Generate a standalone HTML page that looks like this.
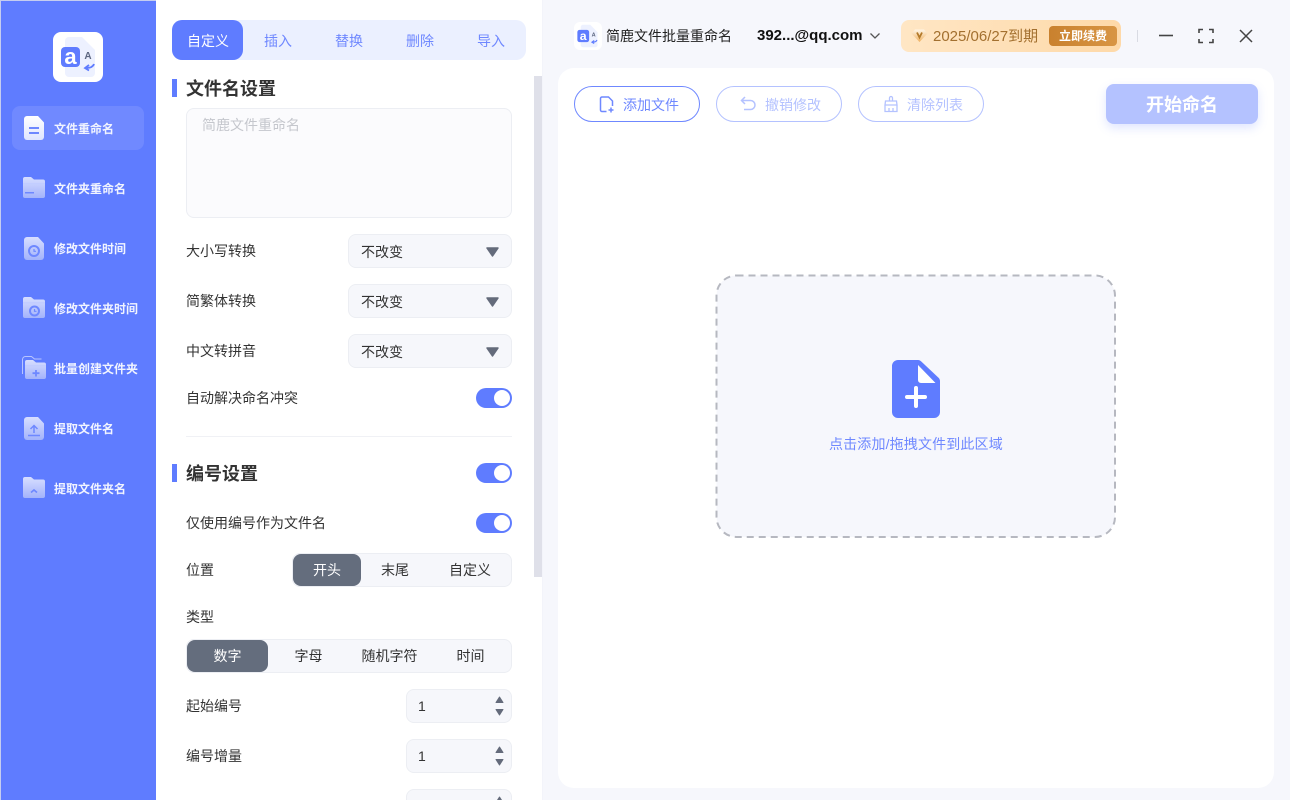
<!DOCTYPE html>
<html lang="zh-CN"><head><meta charset="utf-8"><title>简鹿文件批量重命名</title>
<style>
*{box-sizing:border-box;margin:0;padding:0}
html,body{width:1290px;height:800px;overflow:hidden;background:#f6f7fc}
body{position:relative;font-family:"Liberation Sans","Noto Sans CJK SC",sans-serif;font-size:14px;color:#333}
.a{position:absolute}
.t{position:absolute;white-space:nowrap;line-height:20px}
.side{left:1px;top:1px;width:155px;height:799px;background:#5f7cff}
.nav{position:absolute;left:54px;font-size:12px;font-weight:bold;color:#f1f4ff;line-height:18px;white-space:nowrap}
.ic{position:absolute;left:20px;width:28px;height:28px}
.sel{position:absolute;left:348px;width:164px;height:34px;background:#f6f7fb;border:1px solid #eceef3;border-radius:8px}
.sel span{position:absolute;left:12px;top:7px;line-height:20px;color:#333}
.sel svg{position:absolute;left:136px;top:11px}
.sw{position:absolute;left:476px;width:36px;height:20px;border-radius:10px;background:#5f7cff}
.sw i{position:absolute;right:2px;top:2px;width:16px;height:16px;border-radius:50%;background:#fff}
.seg{position:absolute;height:34px;background:#f6f7fb;border:1px solid #eceef3;border-radius:8px}
.seg b{position:absolute;top:0;height:32px;background:#646d7d;border-radius:8px}
.seg span{position:absolute;top:6px;line-height:20px;text-align:center;color:#333;white-space:nowrap}
.num{position:absolute;left:406px;width:106px;height:34px;background:#f6f7fb;border:1px solid #eceef3;border-radius:8px}
.num span{position:absolute;left:11px;top:6px;line-height:20px;color:#333}
.num svg{position:absolute;left:87px;top:5px}
.btn{position:absolute;top:86px;height:36px;border-radius:18px;background:#fff;border:1px solid #b4c2ff;font-size:14px;color:#b4c2ff;line-height:34px;white-space:nowrap}
.btn span{position:absolute;top:0;line-height:36px}
.bar{position:absolute;left:172px;width:5px;height:18px;background:#5f7cff}
.h{position:absolute;left:186px;font-size:18px;font-weight:bold;color:#333;line-height:24px;white-space:nowrap}
</style></head><body>

<div class="a" style="left:0;top:0;width:156px;height:1px;background:#c5cdf0"></div>
<div class="a" style="left:0;top:0;width:1px;height:800px;background:#c5cdf0"></div>
<div class="a side"></div>
<div class="a" style="left:156px;top:0;width:386px;height:800px;background:#fff"></div>

<!-- logo -->
<div class="a" style="left:53px;top:32px;width:50px;height:50px;background:#fff;border-radius:8px"></div>
<svg class="a" style="left:53px;top:32px" width="50" height="50" viewBox="0 0 50 50">
<path d="M12 9a4 4 0 0 1 4-4h13l13 13v23a4 4 0 0 1-4 4H16a4 4 0 0 1-4-4z" fill="#edf1ff"/>
<rect x="8" y="15" width="19" height="20" rx="4" fill="#5f7cff"/>
<text x="17.500" y="32" font-size="22" font-weight="bold" text-anchor="middle" fill="#fff" font-family="Liberation Sans">a</text>
<text x="35" y="27" font-size="10" font-weight="bold" text-anchor="middle" fill="#5c6680" font-family="Liberation Sans">A</text>
<path d="M41 32c-1 3-4 4-8 4M36 33l-4 3 4 2.500" fill="none" stroke="#5f7cff" stroke-width="1.800"/>
</svg>

<div class="a" style="left:12px;top:106px;width:132px;height:44px;background:#7089ff;border-radius:8px"></div>

<svg class="ic" style="top:114px" viewBox="0 0 28 28"><defs><linearGradient id="g1" x1="0" y1="0" x2="0" y2="1"><stop offset="0" stop-color="#fff"/><stop offset="1" stop-color="#dfe5ff"/></linearGradient><linearGradient id="g2" x1="0" y1="0" x2="0" y2="1"><stop offset="0" stop-color="#d7deff"/><stop offset="1" stop-color="#a3b3fb"/></linearGradient></defs>
<path d="M4 5a3 3 0 0 1 3-3h11l6 6.500V23a3 3 0 0 1-3 3H7a3 3 0 0 1-3-3z" fill="url(#g1)"/><rect x="9" y="13" width="10" height="2" fill="#6e88ff"/><rect x="9" y="18" width="10" height="2" fill="#6e88ff"/></svg>
<div class="nav" style="top:120px">文件重命名</div>

<svg class="ic" style="top:174px" viewBox="0 0 28 28"><path d="M3 5a2 2 0 0 1 2-2h6l3 2.500h9a2 2 0 0 1 2 2V22a2 2 0 0 1-2 2H5a2 2 0 0 1-2-2z" fill="url(#g2)"/><rect x="3" y="9" width="22" height="1.500" fill="#c2cdff"/><rect x="5" y="18" width="9" height="1.500" fill="#6e88ff"/></svg>
<div class="nav" style="top:180px">文件夹重命名</div>

<svg class="ic" style="top:234px" viewBox="0 0 28 28"><path d="M4 6a3 3 0 0 1 3-3h11l6 6.500V23a3 3 0 0 1-3 3H7a3 3 0 0 1-3-3z" fill="url(#g2)"/><circle cx="14" cy="17" r="5" fill="none" stroke="#6e88ff" stroke-width="2"/><path d="M14 15v2.300h2" fill="none" stroke="#6e88ff" stroke-width="1.200"/></svg>
<div class="nav" style="top:240px">修改文件时间</div>

<svg class="ic" style="top:294px" viewBox="0 0 28 28"><path d="M3 5a2 2 0 0 1 2-2h6l3 2.500h9a2 2 0 0 1 2 2V22a2 2 0 0 1-2 2H5a2 2 0 0 1-2-2z" fill="url(#g2)"/><rect x="3" y="8" width="22" height="1.500" fill="#c2cdff"/><circle cx="14.500" cy="17" r="4.500" fill="none" stroke="#6e88ff" stroke-width="2"/><path d="M14.500 15v2.300h2" fill="none" stroke="#6e88ff" stroke-width="1.200"/></svg>
<div class="nav" style="top:300px">修改文件夹时间</div>

<svg class="ic" style="top:354px;left:20px;width:30px;height:30px" viewBox="0 0 30 30"><path d="M2.500 20V5.500a3 3 0 0 1 3-3h6l3 2.500h7" fill="none" stroke="#b8c5ff" stroke-width="1"/><path d="M5 8a2 2 0 0 1 2-2h6l3 2.500h8a2 2 0 0 1 2 2V23a2 2 0 0 1-2 2H7a2 2 0 0 1-2-2z" fill="url(#g2)"/><rect x="5" y="11" width="21" height="1.500" fill="#c2cdff"/><path d="M16 16v6.500M12.500 19.200h7" stroke="#6e88ff" stroke-width="1.800"/></svg>
<div class="nav" style="top:360px">批量创建文件夹</div>

<svg class="ic" style="top:414px" viewBox="0 0 28 28"><path d="M4 6a3 3 0 0 1 3-3h11l6 6.500V23a3 3 0 0 1-3 3H7a3 3 0 0 1-3-3z" fill="url(#g2)"/><path d="M14 19v-7M10.500 15l3.500-3.500 3.500 3.500M8 21.500h12" fill="none" stroke="#6e88ff" stroke-width="1.500"/></svg>
<div class="nav" style="top:420px">提取文件名</div>

<svg class="ic" style="top:474px" viewBox="0 0 28 28"><path d="M3 5a2 2 0 0 1 2-2h6l3 2.500h9a2 2 0 0 1 2 2V22a2 2 0 0 1-2 2H5a2 2 0 0 1-2-2z" fill="url(#g2)"/><path d="M11 18.500l3-2.500 3 2.500" fill="none" stroke="#6e88ff" stroke-width="1.700"/></svg>
<div class="nav" style="top:480px">提取文件夹名</div>

<!-- tabs -->
<div class="a" style="left:172px;top:20px;width:354px;height:40px;background:#ebf0ff;border-radius:10px"></div>
<div class="a" style="left:172px;top:20px;width:71px;height:40px;background:#5f7cff;border-radius:10px"></div>
<div class="t" style="left:187px;top:31px;color:#fff">自定义</div>
<div class="t" style="left:264px;top:31px;color:#6f88ff">插入</div>
<div class="t" style="left:335px;top:31px;color:#6f88ff">替换</div>
<div class="t" style="left:406px;top:31px;color:#6f88ff">删除</div>
<div class="t" style="left:477px;top:31px;color:#6f88ff">导入</div>

<!-- scrollbar -->
<div class="a" style="left:534px;top:76px;width:8px;height:501px;background:#dfe0e9"></div>
<div class="a" style="left:542px;top:0;width:1px;height:800px;background:#f3f4fa"></div>

<!-- file name settings -->
<div class="bar" style="top:79px"></div>
<div class="h" style="top:77px">文件名设置</div>
<div class="a" style="left:186px;top:108px;width:326px;height:110px;background:#fbfbfd;border:1px solid #eceef3;border-radius:8px"></div>
<div class="t" style="left:202px;top:115px;color:#c5c7cd">简鹿文件重命名</div>

<div class="t" style="left:186px;top:241px">大小写转换</div>
<div class="sel" style="top:234px"><span>不改变</span><svg width="16" height="12" viewBox="0 0 16 12"><path d="M2 2h11L7.500 10z" fill="#646b7b" stroke="#646b7b" stroke-width="1.500" stroke-linejoin="round"/></svg></div>
<div class="t" style="left:186px;top:291px">简繁体转换</div>
<div class="sel" style="top:284px"><span>不改变</span><svg width="16" height="12" viewBox="0 0 16 12"><path d="M2 2h11L7.500 10z" fill="#646b7b" stroke="#646b7b" stroke-width="1.500" stroke-linejoin="round"/></svg></div>
<div class="t" style="left:186px;top:341px">中文转拼音</div>
<div class="sel" style="top:334px"><span>不改变</span><svg width="16" height="12" viewBox="0 0 16 12"><path d="M2 2h11L7.500 10z" fill="#646b7b" stroke="#646b7b" stroke-width="1.500" stroke-linejoin="round"/></svg></div>
<div class="t" style="left:186px;top:388px">自动解决命名冲突</div>
<div class="sw" style="top:388px"><i></i></div>
<div class="a" style="left:186px;top:436px;width:326px;height:1px;background:#f0f1f5"></div>

<!-- numbering -->
<div class="bar" style="top:464px"></div>
<div class="h" style="top:462px">编号设置</div>
<div class="sw" style="top:463px"><i></i></div>
<div class="t" style="left:186px;top:513px">仅使用编号作为文件名</div>
<div class="sw" style="top:513px"><i></i></div>

<div class="t" style="left:186px;top:560px">位置</div>
<div class="seg" style="left:292px;top:553px;width:220px"><b style="left:0;width:68px"></b>
<span style="left:0;width:68px;color:#fff">开头</span><span style="left:68px;width:68px">末尾</span><span style="left:136px;width:82px">自定义</span></div>

<div class="t" style="left:186px;top:607px">类型</div>
<div class="seg" style="left:186px;top:639px;width:326px"><b style="left:0;width:81px"></b>
<span style="left:0;width:81px;color:#fff">数字</span><span style="left:81px;width:81px">字母</span><span style="left:162px;width:81px">随机字符</span><span style="left:243px;width:81px">时间</span></div>

<div class="t" style="left:186px;top:696px">起始编号</div>
<div class="num" style="top:689px"><span>1</span><svg width="11" height="22" viewBox="0 0 11 22"><path d="M2 7.500h7L5.500 2zM2 14.500h7L5.500 20z" fill="#646b7b" stroke="#646b7b" stroke-width="1" stroke-linejoin="round"/></svg></div>
<div class="t" style="left:186px;top:746px">编号增量</div>
<div class="num" style="top:739px"><span>1</span><svg width="11" height="22" viewBox="0 0 11 22"><path d="M2 7.500h7L5.500 2zM2 14.500h7L5.500 20z" fill="#646b7b" stroke="#646b7b" stroke-width="1" stroke-linejoin="round"/></svg></div>
<div class="num" style="top:789px"><svg width="11" height="22" viewBox="0 0 11 22"><path d="M2 7.500h7L5.500 2z" fill="#646b7b" stroke="#646b7b" stroke-width="1" stroke-linejoin="round"/></svg></div>

<!-- title bar -->
<div class="a" style="left:574px;top:22px;width:28px;height:28px;background:#fff;border-radius:6px"></div>
<svg class="a" style="left:574px;top:22px" width="28" height="28" viewBox="0 0 50 50">
<path d="M12 9a4 4 0 0 1 4-4h13l13 13v23a4 4 0 0 1-4 4H16a4 4 0 0 1-4-4z" fill="#edf1ff"/>
<rect x="6" y="14" width="21" height="22" rx="4" fill="#5f7cff"/>
<text x="16.500" y="32" font-size="22" font-weight="bold" text-anchor="middle" fill="#fff" font-family="Liberation Sans">a</text>
<text x="35" y="26" font-size="10" font-weight="bold" text-anchor="middle" fill="#5c6680" font-family="Liberation Sans">A</text>
<path d="M41 32c-1 3-4 4-8 4M36 33l-4 3 4 2.500" fill="none" stroke="#5f7cff" stroke-width="2"/>
</svg>
<div class="t" style="left:606px;top:26px;color:#222">简鹿文件批量重命名</div>
<div class="t" style="left:757px;top:26px;color:#111;font-weight:bold;font-size:15px">392...@qq.com</div>
<svg class="a" style="left:868px;top:30px" width="14" height="12" viewBox="0 0 14 12"><path d="M2.500 3.500l4.500 4.500 4.500-4.500" fill="none" stroke="#555" stroke-width="1.300"/></svg>

<div class="a" style="left:901px;top:20px;width:220px;height:32px;border-radius:8px;background:linear-gradient(90deg,#ffe6c4,#fed9a9)"></div>
<svg class="a" style="left:911px;top:27px" width="18" height="18" viewBox="0 0 18 18"><defs><linearGradient id="g3" x1="0" y1="0" x2="0" y2="1"><stop offset="0" stop-color="#fff6e8"/><stop offset="1" stop-color="#f0b160"/></linearGradient></defs><path d="M4 2.500h9l3.500 4-8 8.500-8-8.500z" fill="url(#g3)"/><path d="M6 5.500l2.500 5 2.500-5" fill="none" stroke="#b37a2a" stroke-width="1.800"/></svg>
<div class="t" style="left:933px;top:27px;color:#a3702f;font-size:15px">2025/06/27到期</div>
<div class="a" style="left:1049px;top:26px;width:68px;height:20px;border-radius:4px;background:linear-gradient(90deg,#c9812e,#d89544)"></div>
<div class="t" style="left:1049px;top:26px;width:68px;text-align:center;font-size:12px;font-weight:bold;color:#fff">立即续费</div>

<div class="a" style="left:1137px;top:30px;width:1px;height:12px;background:#d9dbe3"></div>
<svg class="a" style="left:1156px;top:26px" width="100" height="20" viewBox="0 0 100 20">
<path d="M3 9.500h14" stroke="#444" stroke-width="1.600"/>
<path d="M43 7V3.500h4M53 3.500h4V7M57 13v3.500h-4M47 16.500h-4V13" fill="none" stroke="#444" stroke-width="1.600"/>
<path d="M84 4l12 12M96 4L84 16" stroke="#444" stroke-width="1.500"/>
</svg>

<!-- main -->
<div class="a" style="left:558px;top:68px;width:716px;height:720px;background:#fff;border-radius:16px"></div>

<div class="btn" style="left:574px;width:126px;border-color:#6f88ff;color:#6f88ff"><span style="left:48px">添加文件</span></div>
<svg class="a" style="left:598px;top:95px" width="18" height="19" viewBox="0 0 18 19"><path d="M8.500 16.500H4a1.500 1.500 0 0 1-1.500-1.500V3.500A1.500 1.500 0 0 1 4 2h6.500l4 4v5" fill="none" stroke="#6f88ff" stroke-width="1.500"/><path d="M13 12.500v5M10.500 15h5" stroke="#6f88ff" stroke-width="1.500"/></svg>

<div class="btn" style="left:716px;width:126px"><span style="left:48px">撤销修改</span></div>
<svg class="a" style="left:739px;top:95px" width="19" height="18" viewBox="0 0 19 18"><path d="M6 2L2.500 5.500 6 9M3 5.500h8.500a4.500 4.500 0 0 1 0 9H5" fill="none" stroke="#b4c2ff" stroke-width="1.500"/></svg>

<div class="btn" style="left:858px;width:126px"><span style="left:48px">清除列表</span></div>
<svg class="a" style="left:882px;top:95px" width="18" height="18" viewBox="0 0 18 18"><path d="M7.500 6V3a1.500 1.500 0 0 1 3 0v3M3.500 6h11l.5 4H3zM3 10v6.500h12V10M7 13v3.500M11 13v3.500" fill="none" stroke="#b4c2ff" stroke-width="1.300"/></svg>

<div class="a" style="left:1106px;top:84px;width:152px;height:40px;border-radius:8px;background:#b4c2ff;box-shadow:0 4px 10px rgba(95,124,255,.2);color:#fff;font-size:18px;font-weight:bold;text-align:center;line-height:42px">开始命名</div>

<!-- drop zone -->
<svg class="a" style="left:715px;top:274px" width="402" height="265" viewBox="0 0 402 265"><rect x="1.500" y="1.500" width="398.500" height="261.500" rx="20" fill="#f6f7fc" stroke="#b6b8c0" stroke-width="2" stroke-dasharray="7 5"/></svg>
<svg class="a" style="left:892px;top:360px" width="48" height="58" viewBox="0 0 48 58">
<path d="M6 0h20a4 4 0 0 1 3 1.200L46.800 18a4 4 0 0 1 1.200 3V52a6 6 0 0 1-6 6H6a6 6 0 0 1-6-6V6a6 6 0 0 1 6-6z" fill="#5f7cff"/>
<path d="M26 5l17.500 18H29a3 3 0 0 1-3-3z" fill="#fff"/>
<path d="M24 28v18M15 37h18" stroke="#fff" stroke-width="4" stroke-linecap="round"/>
</svg>
<div class="t" style="left:829px;top:434px;color:#6f88ff;letter-spacing:.15px">点击添加/拖拽文件到此区域</div>

</body></html>
